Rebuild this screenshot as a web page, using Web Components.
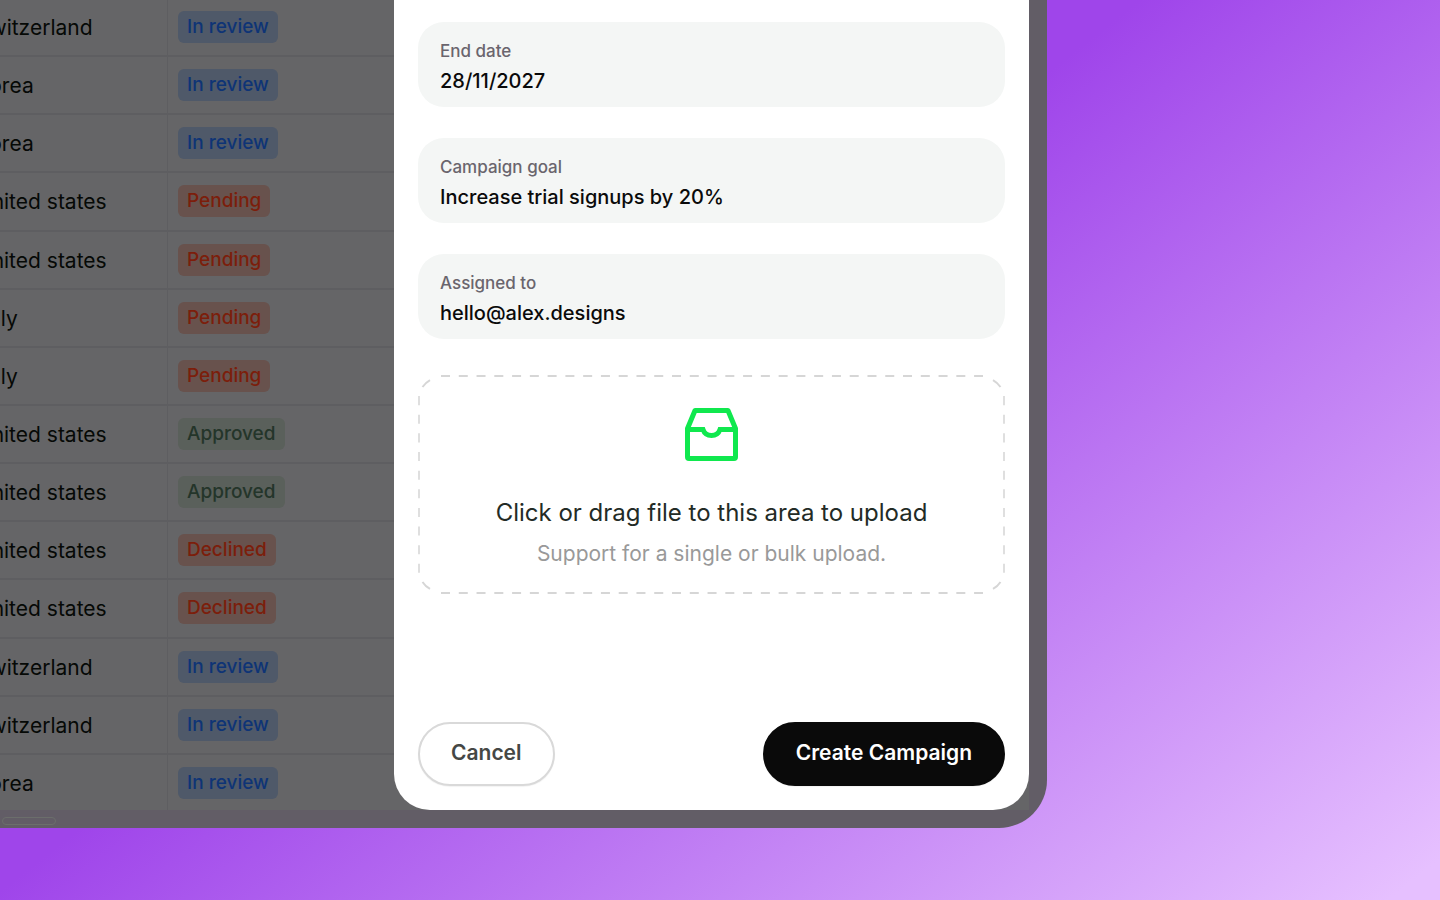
<!DOCTYPE html>
<html lang="en">
<head>
<meta charset="utf-8">
<title>Create campaign</title>
<style>
html, body { height: 100%; }
body { margin: 0; overflow: hidden; font-family: Inter, sans-serif; color: #0a0a0a; }
</style>
</head>
<body>
<app-window></app-window>

<template id="app-window">
<style>
:host { display: block; box-sizing: border-box; height: 100%; padding: 0 393px 72px 0;
  background: linear-gradient(142deg, #9f45ea 44%, #e6c0ff 98%); }
main { display: grid; grid-template: minmax(0, 1fr) 18px / 394px minmax(0, 1fr); height: 100%; box-sizing: border-box;
  padding-right: 18px; border-radius: 0 0 48px 0; background: #625d66; }
campaign-table { grid-area: 1 / 1 / 2 / 3; }
campaign-dialog { grid-area: 1 / 2 / 2 / 3; z-index: 1; }
.scroll-thumb { grid-area: 2 / 1; width: 54px; height: 8px; margin: 7px 2px; box-sizing: border-box; border: 1px solid #6b6e6b; border-radius: 4px; }
</style>
<main>
<campaign-table></campaign-table>
<campaign-dialog></campaign-dialog>
<div class="scroll-thumb"></div>
</main>
</template>

<template id="campaign-table">
<style>
:host { display: block; overflow: hidden; background: #656567; }
table { width: 100%; height: calc(100% + 4px); margin-top: -1px; border-collapse: separate; border-spacing: 0; table-layout: fixed; font-size: 21px; font-weight: 400; color: #060906; }
col:first-child { width: 168px; }
td { padding: 0 10px; border-bottom: 2px solid #5e5e61; line-height: 24px; white-space: nowrap; }
td:first-child { border-right: 1px solid #5e5e61; padding: 2px 0 0; }
td span { display: block; margin-left: -24px; }
</style>
<table><colgroup><col><col></colgroup><tbody></tbody></table>
</template>

<template id="status-tag">
<style>
:host { display: inline-block; vertical-align: middle; padding: 0 9px; border-radius: 6px; font-size: 19px; line-height: 32px; font-weight: 500; background: #4f5969; color: #0e3476; }
:host([tone="warn"]) { background: #68524d; color: #7c1e0b; }
:host([tone="ok"]) { background: #5a605b; color: #24352a; }
</style>
<slot></slot>
</template>

<template id="campaign-dialog">
<style>
:host { display: flex; flex-direction: column; box-sizing: border-box; padding: 22px 24px 24px; background: #fff; border-radius: 0 0 36px 36px; }
form { display: flex; flex-direction: column; flex: 1; gap: 31px; }
upload-area { margin-top: 5px; }
footer { display: flex; justify-content: space-between; margin-top: auto; }
</style>
<form>
<form-field label="End date" value="28/11/2027"></form-field>
<form-field label="Campaign goal" value="Increase trial signups by 20%"></form-field>
<form-field label="Assigned to" value="hello@alex.designs"></form-field>
<upload-area></upload-area>
<footer>
<pill-button>Cancel</pill-button>
<pill-button primary>Create Campaign</pill-button>
</footer>
</form>
</template>

<template id="form-field">
<style>
:host { display: flex; flex-direction: column; gap: 2px; box-sizing: border-box; padding: 17px 22px 9px; border-radius: 26px; background: #f4f6f5; }
label { font-size: 17px; line-height: 24px; color: #6a656d; font-weight: 500; }
input { width: 100%; box-sizing: border-box; height: 33px; margin: 0; padding: 0; border: 0; outline: 0; background: none; font: 500 20px/33px Inter, sans-serif; color: #0a0a0a; }
</style>
<label for="control"></label>
<input id="control" type="text">
</template>

<template id="upload-area">
<style>
:host { display: block; }
label { position: relative; display: flex; flex-direction: column; align-items: center; box-sizing: border-box; padding: 33px 24px 24px; text-align: center; cursor: pointer; }
input { position: absolute; width: 1px; height: 1px; opacity: 0; }
.frame { position: absolute; inset: 0; width: 100%; height: 100%; }
.icon { width: 54px; height: 54px; }
strong { margin-top: 34px; font-weight: 400; font-size: 24px; line-height: 34px; color: #232b26; }
small { margin-top: 8px; font-size: 21px; line-height: 32px; color: #999; }
</style>
<label>
<input type="file" multiple>
<svg class="frame" viewBox="0 0 587 218" preserveAspectRatio="none" fill="none" stroke="#d6d6d6" stroke-width="2" aria-hidden="true">
<path d="M23 1H565M23 217H565" stroke-dasharray="9 8.77"/>
<path d="M1 21V197M586 21V197" stroke="#dfdfdf" stroke-dasharray="9 9.55"/>
<path d="M4.500 12Q7.500 7.500 12 5M575 5Q579.500 7.500 582.500 12M4.500 206Q7.500 210.500 12 213M575 213Q579.500 210.500 582.500 206"/>
</svg>
<svg class="icon" viewBox="0 0 54 54" fill="none" stroke="#10e84e" stroke-width="5" stroke-linejoin="round" aria-hidden="true">
<path d="M2.500 20.500L10 2.500H43L50.500 20.500V49Q50.500 50.500 49 50.500H4Q2.500 50.500 2.500 49Z"/>
<path stroke-linejoin="miter" d="M2.500 21.500H18A9 9 0 0 0 35 21.500H50.500"/>
</svg>
<strong>Click or drag file to this area to upload</strong>
<small>Support for a single or bulk upload.</small>
</label>
</template>

<template id="pill-button">
<style>
:host { display: block; }
button { height: 64px; box-sizing: border-box; padding: 0 31px 2px; border: 2px solid #d9d9d9; border-radius: 32px; background: #fff; color: #454745; font: 600 21px/28px Inter, sans-serif; box-shadow: 0 1px 1px #0000000d; }
:host([primary]) button { background: #0a0a0a; border-color: #0a0a0a; color: #fff; }
</style>
<button type="button"><slot></slot></button>
</template>

<script>
class TemplateElement extends HTMLElement {
  constructor() {
    super();
    this.attachShadow({ mode: 'open' }).append(document.getElementById(this.localName).content.cloneNode(true));
  }
}
customElements.define('status-tag', class extends TemplateElement {});
customElements.define('pill-button', class extends TemplateElement {});
customElements.define('upload-area', class extends TemplateElement {});
customElements.define('form-field', class extends TemplateElement {
  connectedCallback() {
    this.shadowRoot.querySelector('label').textContent = this.getAttribute('label');
    this.shadowRoot.querySelector('input').value = this.getAttribute('value');
  }
});
const rows = [
  ['Switzerland', 'In review'], ['Korea', 'In review'], ['Korea', 'In review'],
  ['United states', 'Pending'], ['United states', 'Pending'], ['Italy', 'Pending'], ['Italy', 'Pending'],
  ['United states', 'Approved'], ['United states', 'Approved'],
  ['United states', 'Declined'], ['United states', 'Declined'],
  ['Switzerland', 'In review'], ['Switzerland', 'In review'], ['Korea', 'In review']
];
const tones = { 'In review': 'info', Pending: 'warn', Declined: 'warn', Approved: 'ok' };
customElements.define('campaign-table', class extends TemplateElement {
  connectedCallback() {
    this.shadowRoot.querySelector('tbody').innerHTML = rows.map(([country, status]) =>
      `<tr><td><span>${country}</span></td><td><status-tag tone="${tones[status]}">${status}</status-tag></td></tr>`).join('');
  }
});
customElements.define('campaign-dialog', class extends TemplateElement {});
customElements.define('app-window', class extends TemplateElement {});
</script>
</body>
</html>
